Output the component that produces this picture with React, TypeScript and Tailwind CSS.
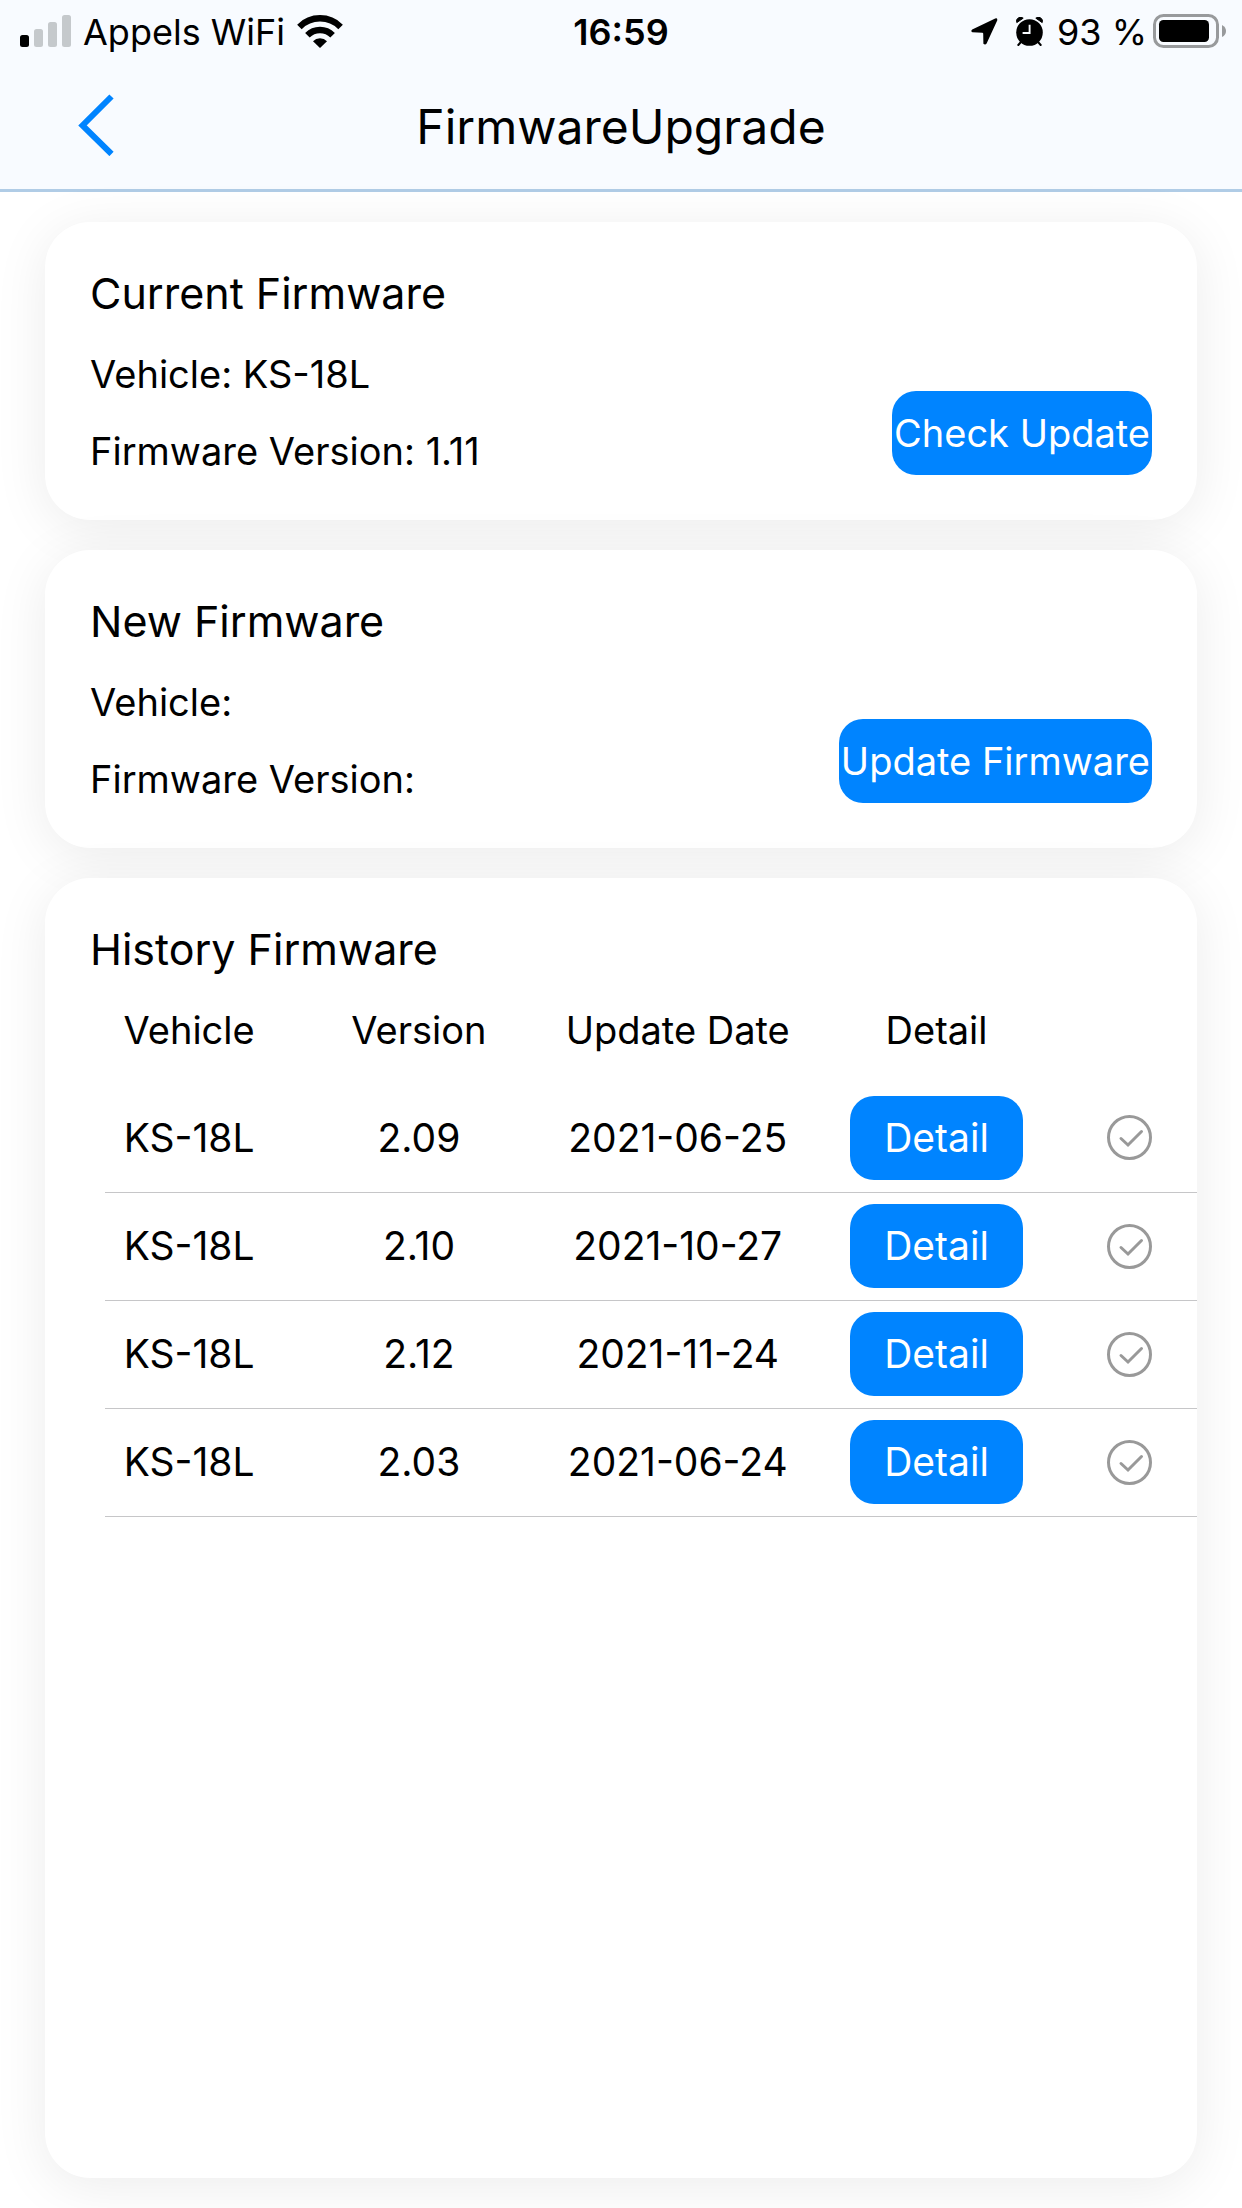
import React from "react";

const HISTORY = [
  { vehicle: "KS-18L", version: "2.09", date: "2021-06-25" },
  { vehicle: "KS-18L", version: "2.10", date: "2021-10-27" },
  { vehicle: "KS-18L", version: "2.12", date: "2021-11-24" },
  { vehicle: "KS-18L", version: "2.03", date: "2021-06-24" },
];

const CARD = "rounded-[45px] bg-white shadow-[0_8px_54px_rgba(0,0,0,0.08)]";
const BUTTON =
  "h-[84px] shrink-0 whitespace-nowrap rounded-3xl bg-[#0084ff] text-center text-white";

function SignalIcon() {
  return (
    <svg width="51" height="32" viewBox="0 0 51 32" aria-hidden="true">
      <rect x="0" y="20" width="9" height="12" rx="2.5" fill="#000" />
      <rect x="14" y="14" width="9" height="18" rx="2.5" fill="#c5c9cc" />
      <rect x="28" y="7" width="9" height="25" rx="2.5" fill="#c5c9cc" />
      <rect x="42" y="0" width="9" height="32" rx="2.5" fill="#c5c9cc" />
    </svg>
  );
}

function WifiIcon() {
  return (
    <svg width="46" height="33" viewBox="0 0 46 33" aria-hidden="true">
      <g fill="none" stroke="#000" strokeWidth="6.4">
        <path d="M2.4 11.9 A29 29 0 0 1 43.6 11.9" />
        <path d="M10.4 20.2 A17.8 17.8 0 0 1 35.6 20.2" />
      </g>
      <path d="M16 26.2 A10 10 0 0 1 30 26.2 L23 33 Z" fill="#000" />
    </svg>
  );
}

function LocationIcon() {
  return (
    <svg width="27" height="27" viewBox="0 0 27 27" aria-hidden="true">
      <path
        d="M1.2 11.6 L24.2 .5 Q26.8 -.2 26.2 2.6 L15.6 25.4 Q14.4 27.2 12.4 25.8 L12.2 15.4 Q12 14.8 11.4 14.7 L1.4 14.2 Q-.6 13 1.2 11.6 Z"
        fill="#000"
      />
    </svg>
  );
}

function AlarmIcon() {
  return (
    <svg width="27" height="29" viewBox="0 0 27 29" aria-hidden="true">
      <circle cx="13.5" cy="15.5" r="13.3" fill="#000" />
      <path d="M.8 5.6 A4 4 0 0 1 7.2 1.2 Z M26.2 5.6 A4 4 0 0 0 19.8 1.2 Z" fill="#000" stroke="#000" strokeLinejoin="round" />
      <path d="M4.5 25.5 L2.3 28 M22.5 25.5 L24.7 28" stroke="#000" strokeWidth="2" strokeLinecap="round" />
      <path d="M13.6 7.8 V16 H6.6" fill="none" stroke="#f8fbff" strokeWidth="1.9" />
    </svg>
  );
}

function BatteryIcon() {
  return (
    <svg width="73" height="34" viewBox="0 0 73 34" aria-hidden="true">
      <rect x="1.5" y="1.5" width="63" height="31" rx="9" fill="none" stroke="#989a9c" strokeWidth="3" />
      <rect x="6" y="6" width="50" height="22" rx="4.5" fill="#000" />
      <path d="M69 11 Q73 13 73 17 Q73 21 69 23 Z" fill="#989a9c" />
    </svg>
  );
}

function CheckIcon() {
  return (
    <svg width="45" height="45" viewBox="0 0 45 45" fill="none" stroke="#999" aria-hidden="true">
      <circle cx="22.5" cy="22.5" r="21" strokeWidth="3" />
      <path d="M14 23.5 L21 30 L34.5 16.5" strokeWidth="3" strokeLinecap="round" />
    </svg>
  );
}

function FirmwareCard({
  title,
  vehicle,
  version,
  action,
}: {
  title: string;
  vehicle: string;
  version: string;
  action: string;
}) {
  return (
    <section className={`${CARD} flex items-end justify-between px-[45px] pt-[45px]`}>
      <div className="pb-[30px]">
        <h2 className="mb-4 text-[43px] leading-[53px]">{title}</h2>
        <p className="leading-[77px]">Vehicle: {vehicle}</p>
        <p className="leading-[77px]">Firmware Version: {version}</p>
      </div>
      <button type="button" className={`${BUTTON} mb-[45px] px-0.5`}>
        {action}
      </button>
    </section>
  );
}

export default function App() {
  return (
    <div className="flex min-h-screen flex-col bg-white font-['Inter',sans-serif] text-[38px] text-black">
      <header className="border-b-[3px] border-[#b0cce6] bg-[#f8fbff]">
        <div className="grid h-[60px] grid-cols-[1fr_auto_1fr] items-center px-4 text-[36px] leading-[60px]">
          <div className="flex items-center gap-3 pl-1">
            <SignalIcon />
            <span className="pt-0.5">Appels WiFi</span>
            <WifiIcon />
          </div>
          <time className="pt-0.5 font-semibold">16:59</time>
          <div className="flex items-center justify-end">
            <LocationIcon />
            <span className="ml-[18px]">
              <AlarmIcon />
            </span>
            <span className="ml-3.5 mr-1.5 pt-0.5">93 %</span>
            <BatteryIcon />
          </div>
        </div>
        <div className="grid h-[129px] grid-cols-[1fr_auto_1fr] items-center">
          <button type="button" aria-label="Back" className="ml-[78px] w-9">
            <svg width="36" height="62" viewBox="0 0 36 62" fill="none" stroke="#0084ff" strokeWidth="6" aria-hidden="true">
              <path d="M33.5 2.5 L4.5 31.5 L33.5 60" />
            </svg>
          </button>
          <h1 className="pt-1 text-[48px] leading-[60px]">FirmwareUpgrade</h1>
        </div>
      </header>

      <main className="flex flex-1 flex-col gap-[30px] px-[45px] py-[30px]">
        <FirmwareCard title="Current Firmware" vehicle="KS-18L" version="1.11" action="Check Update" />
        <FirmwareCard title="New Firmware" vehicle="" version="" action="Update Firmware" />

        <section className={`${CARD} flex-1 pl-[45px] pt-[45px]`}>
          <h2 className="text-[43px] leading-[53px]">History Firmware</h2>
          <div className="pl-[15px]">
            <table className="w-full table-fixed text-center">
              <colgroup>
                <col className="w-[15.4%]" />
                <col className="w-[26.7%]" />
                <col className="w-[20.7%]" />
                <col className="w-[26.7%]" />
                <col />
              </colgroup>
              <thead>
                <tr className="h-[108px] whitespace-nowrap">
                  <th className="font-normal">Vehicle</th>
                  <th className="font-normal">Version</th>
                  <th className="font-normal">Update Date</th>
                  <th className="font-normal">Detail</th>
                  <th aria-label="Selected" />
                </tr>
              </thead>
              <tbody className="text-[39px]">
                {HISTORY.map((row) => (
                  <tr key={row.date} className="h-[108px] whitespace-nowrap border-b border-[#c6c6c8]">
                    <td>{row.vehicle}</td>
                    <td>{row.version}</td>
                    <td>{row.date}</td>
                    <td>
                      <button type="button" className={`${BUTTON} w-[173px]`}>
                        Detail
                      </button>
                    </td>
                    <td className="pr-5">
                      <button type="button" aria-label={`Select version ${row.version}`} className="mx-auto block">
                        <CheckIcon />
                      </button>
                    </td>
                  </tr>
                ))}
              </tbody>
            </table>
          </div>
        </section>
      </main>
    </div>
  );
}
